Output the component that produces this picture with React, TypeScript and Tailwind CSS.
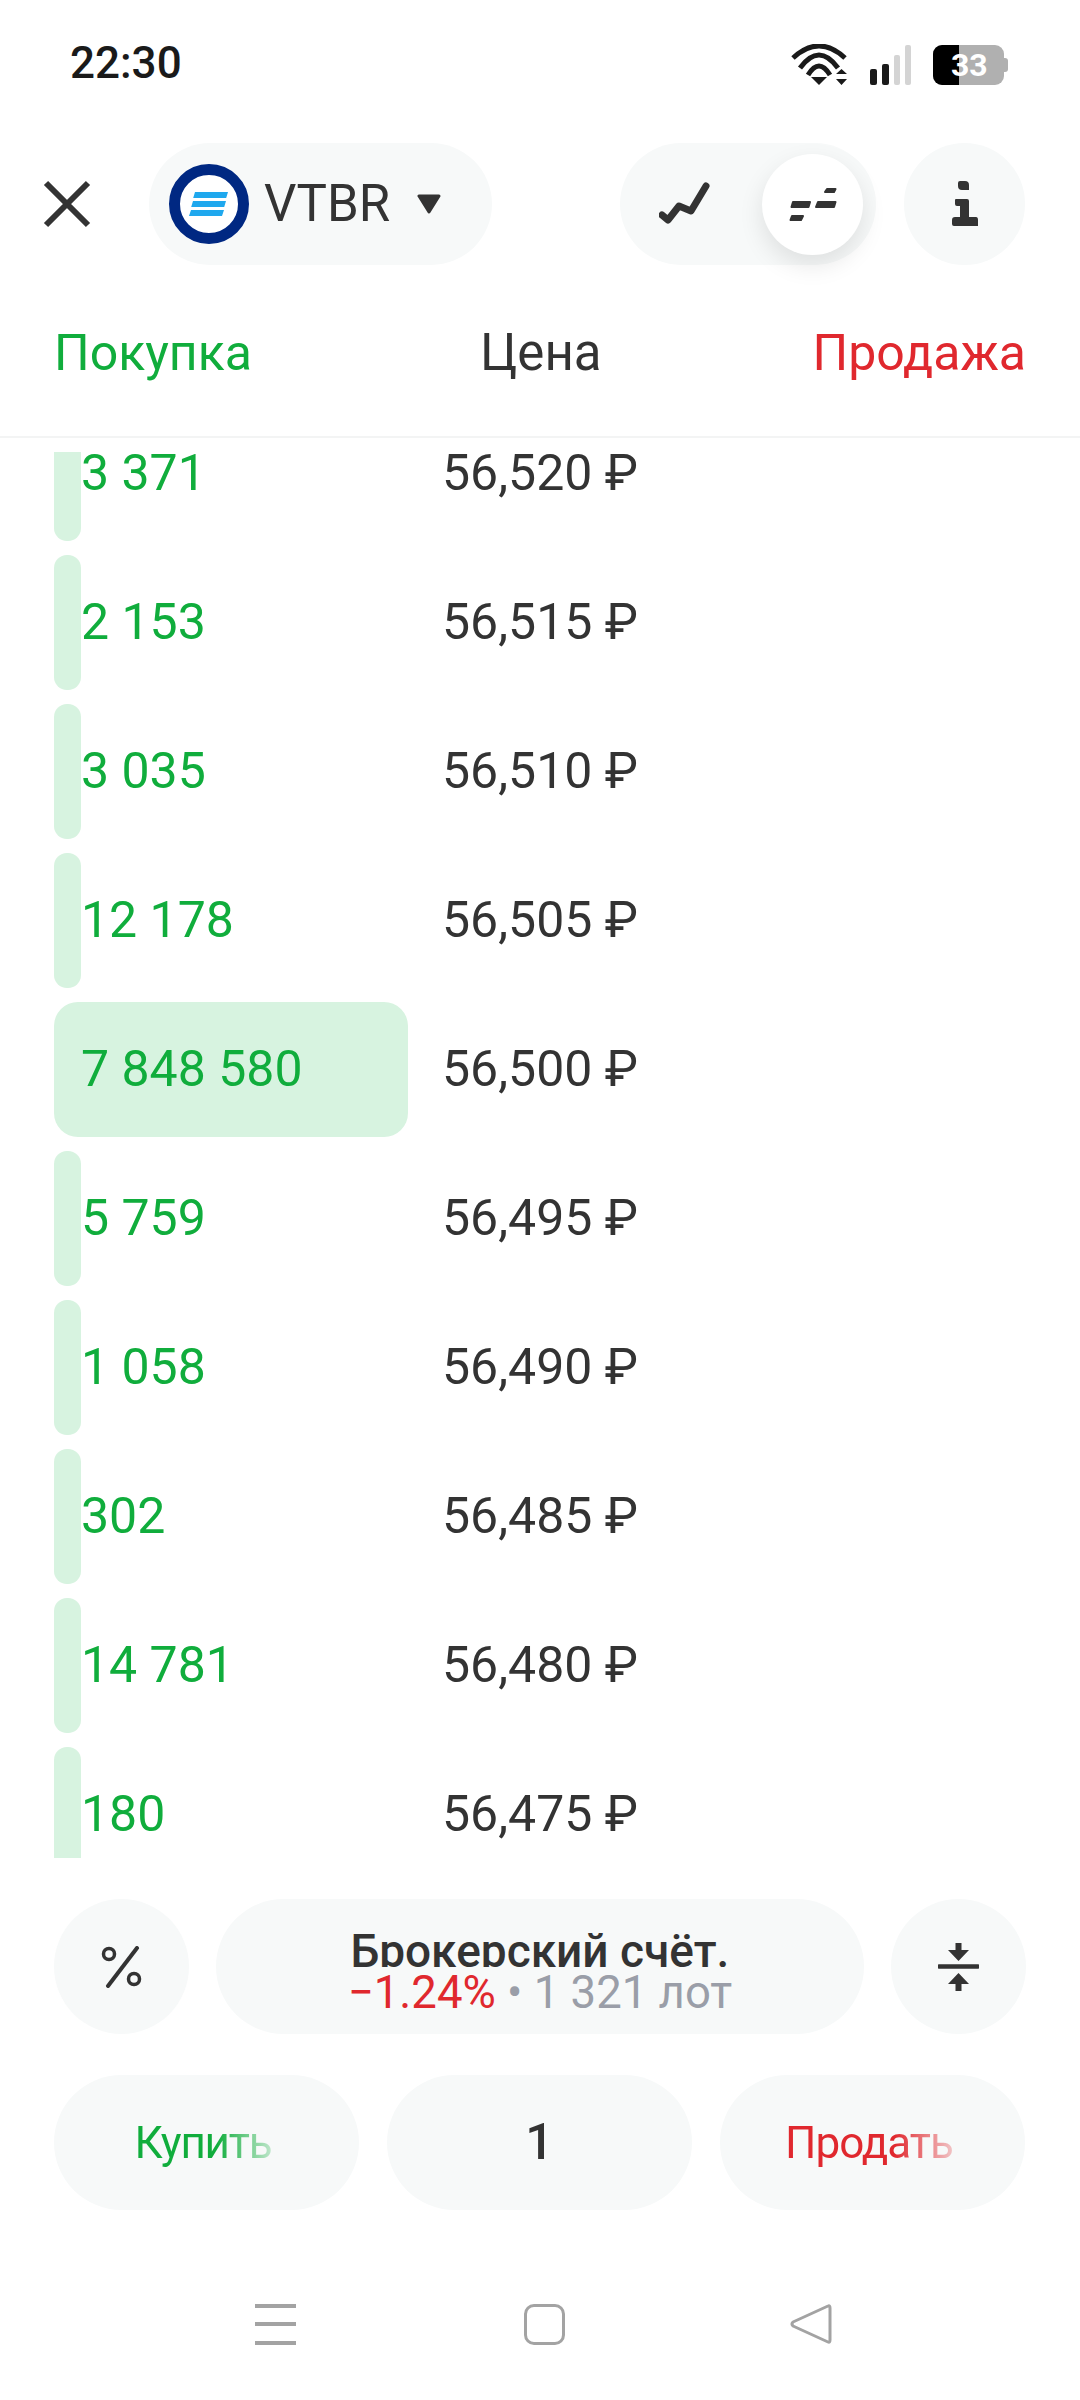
import React from 'react';

const rows = [
  { qty: '3 371', price: '56,520 ₽', width: 27 },
  { qty: '2 153', price: '56,515 ₽', width: 27 },
  { qty: '3 035', price: '56,510 ₽', width: 27 },
  { qty: '12 178', price: '56,505 ₽', width: 27 },
  { qty: '7 848 580', price: '56,500 ₽', width: 354 },
  { qty: '5 759', price: '56,495 ₽', width: 27 },
  { qty: '1 058', price: '56,490 ₽', width: 27 },
  { qty: '302', price: '56,485 ₽', width: 27 },
  { qty: '14 781', price: '56,480 ₽', width: 27 },
  { qty: '180', price: '56,475 ₽', width: 27 },
];

const StatusIcons = () => (
  <div className="flex items-center">
    <svg width="57" height="42" viewBox="0 0 57 42" className="mr-[22px]">
      <g fill="none" stroke="#1a1a1a" strokeWidth="5" strokeLinecap="butt">
        <path d="M2 14 Q28 -10 54 14" />
        <path d="M9 24 Q28 -2 47 24" />
        <path d="M17 31 Q28 13 39 31" />
      </g>
      <path d="M20 33 L36 33 L28 41 Z" fill="#1a1a1a" />
      <path d="M45 30 L50.5 25 L56 30 Z M45 35 L56 35 L50.5 41 Z" fill="#1a1a1a" />
    </svg>
    <div className="flex items-end gap-[5px] h-[40px] mr-[22px]">
      <div className="w-[7px] h-[16px] rounded-[2px] bg-[#1a1a1a]" />
      <div className="w-[7px] h-[21px] rounded-[2px] bg-[#1a1a1a]" />
      <div className="w-[6px] h-[30px] rounded-[2px] bg-[#d4d4d4]" />
      <div className="w-[6px] h-[40px] rounded-[2px] bg-[#d4d4d4]" />
    </div>
    <div className="relative flex items-center">
      <div className="flex w-[71px] h-[40px] rounded-[9px] overflow-hidden bg-[#b0b0b0]">
        <div className="w-[26px] bg-black" />
      </div>
      <div className="w-[4px] h-[14px] rounded-r-[3px] bg-[#b0b0b0]" />
      <span className="absolute left-[18px] top-0 h-[40px] leading-[40px] text-[32px] font-bold text-white">33</span>
    </div>
  </div>
);

const CloseIcon = () => (
  <svg width="48" height="48" viewBox="0 0 48 48">
    <path d="M3 3 L45 45 M45 3 L3 45" stroke="#333" strokeWidth="6" fill="none" />
  </svg>
);

const VtbLogo = () => (
  <div className="w-[80px] h-[80px] rounded-full border-[11px] border-[#002882] bg-white flex items-center justify-center shrink-0">
    <svg width="40" height="26" viewBox="0 0 40 26">
      <path d="M6 1 H39 L37.2 7 H4.2 Z M4 10 H37 L35.2 16 H2.2 Z M2 19 H35 L33 25 H0 Z" fill="#1fa8ee" />
    </svg>
  </div>
);

const ChartIcon = () => (
  <svg width="52" height="44" viewBox="0 0 52 44">
    <path d="M3 33 L9 38 L20 24 L32 29 L47 4" fill="none" stroke="#333" strokeWidth="7" strokeLinecap="round" strokeLinejoin="round" />
  </svg>
);

const BookIcon = () => (
  <svg width="48" height="35" viewBox="0 0 48 35">
    <path d="M38 2 H46.5 L45 5 H36 Z M29 15 H46.5 L45 20 H27 Z M4 15 H21 L19.5 20 H2.5 Z M3 29 H14 L12 33 H1.5 Z" fill="#333" stroke="#333" strokeWidth="2" strokeLinejoin="round" />
  </svg>
);

const InfoIcon = () => (
  <svg width="26" height="46" viewBox="0 0 26 46">
    <path d="M8 0 H13 Q17 0 17 4 V9 H10 Q6 9 6 5 V2 Q6 0 8 0 Z M4 18 H15 Q17 18 17 20 V36 H24 Q26 36 26 39 V45 H2 Q0 45 0 43 V39 Q0 36 3 36 H8 V25 H5 Q3 25 3 23 V19 Q3 18 4 18 Z" fill="#333" />
  </svg>
);

const PercentIcon = () => (
  <svg width="42" height="42" viewBox="0 0 42 42">
    <g fill="none" stroke="#333" strokeWidth="3.5">
      <circle cx="8" cy="8" r="5.5" />
      <circle cx="33" cy="33" r="5.5" />
      <path d="M36 2 L7 40" strokeWidth="4" strokeLinecap="round" />
    </g>
  </svg>
);

const CompressIcon = () => (
  <svg width="41" height="50" viewBox="0 0 41 50">
    <path d="M1 24.5 H40" stroke="#333" strokeWidth="4.5" strokeLinecap="round" />
    <path d="M17.5 1 H23.5 V8 H31 L20.5 19 L10 8 H17.5 Z" fill="#333" />
    <path d="M17.5 49 H23.5 V42 H31 L20.5 31 L10 42 H17.5 Z" fill="#333" />
  </svg>
);

const BookRow = ({ qty, price, width }: { qty: string; price: string; width: number }) => (
  <div className="flex items-center h-[135px] shrink-0">
    <div className="relative flex items-center w-[388px] h-full">
      <div className="absolute inset-y-0 left-0 bg-[#d7f3e0]" style={{ width, borderRadius: width > 100 ? 24 : 13 }} />
      <span className="relative pl-[27px] text-[50px] text-[#10ad3c]">{qty}</span>
    </div>
    <span className="text-[50px] text-[#333]">{price}</span>
  </div>
);

export default function App() {
  return (
    <div className="w-[1080px] h-[2400px] bg-white flex flex-col overflow-hidden font-['Roboto',sans-serif]">
      <div className="h-[143px] flex items-start justify-between pt-[44px] pl-[70px] pr-[72px]">
        <span className="text-[44px] leading-[38px] font-medium text-[#1a1a1a]">22:30</span>
        <StatusIcons />
      </div>

      <div className="h-[122px] flex items-center pl-[43px] pr-[54px]">
        <CloseIcon />
        <div className="ml-[58px] w-[343px] h-[122px] rounded-full bg-[#f7f9f9] flex items-center pl-[20px]">
          <VtbLogo />
          <span className="ml-[15px] text-[51px] text-[#333]">VTBR</span>
          <svg width="24" height="20" viewBox="0 0 24 20" className="ml-[27px]">
            <path d="M2 2 H22 L12 18 Z" fill="#333" stroke="#333" strokeWidth="3" strokeLinejoin="round" />
          </svg>
        </div>
        <div className="ml-[128px] w-[256px] h-[122px] rounded-full bg-[#f7f9f9] flex items-center">
          <div className="ml-[39px] w-[52px] flex justify-center">
            <ChartIcon />
          </div>
          <div className="ml-[51px] w-[101px] h-[101px] rounded-full bg-white shadow-[0_10px_24px_rgba(0,0,0,0.1)] flex items-center justify-center">
            <BookIcon />
          </div>
        </div>
        <div className="ml-[28px] w-[121px] h-[122px] rounded-full bg-[#f7f9f9] flex items-center justify-center">
          <InfoIcon />
        </div>
      </div>

      <div className="h-[173px] border-b-2 border-[#f3f4f4] flex items-center justify-between pl-[54px] pr-[54px] pt-[6px] text-[50px]">
        <span className="text-[#10ad3c]">Покупка</span>
        <span className="text-[#333] ml-[17px] text-[51px]">Цена</span>
        <span className="text-[#e0282e]">Продажа</span>
      </div>

      <div className="mt-[14px] mx-[54px] h-[1406px] overflow-hidden">
        <div className="mt-[-46px] flex flex-col gap-[14px]">
          {rows.map((row) => (
            <BookRow key={row.price} {...row} />
          ))}
        </div>
      </div>

      <div className="mt-[41px] mx-[54px] flex gap-[27px] h-[135px]">
        <div className="w-[135px] rounded-full bg-[#f7f9f9] flex items-center justify-center">
          <PercentIcon />
        </div>
        <div className="flex-1 rounded-full bg-[#f7f9f9] flex flex-col items-center pt-[30px]">
          <div className="h-[38px] overflow-hidden text-[46px] leading-[44px] font-medium text-[#333]">Брокерский счёт.</div>
          <div className="mt-[4px] text-[45.5px] leading-[44px] text-[#9a9ea8]">
            <span className="text-[#e0282e]">−1.24%</span> • 1 321 лот
          </div>
        </div>
        <div className="w-[135px] rounded-full bg-[#f7f9f9] flex items-center justify-center">
          <CompressIcon />
        </div>
      </div>

      <div className="mt-[41px] mx-[54px] flex gap-[28px] h-[135px]">
        <div className="w-[305px] rounded-full bg-[#f7f9f9] flex items-center justify-center pr-[7px]">
          <span className="text-[44px] tracking-[-1.2px] bg-gradient-to-r from-[#10ad3c] from-60% to-[#10ad3c]/25 bg-clip-text text-transparent">Купить</span>
        </div>
        <div className="w-[305px] rounded-full bg-[#f7f9f9] flex items-center justify-center text-[50px] font-medium text-[#333]">1</div>
        <div className="w-[305px] rounded-full bg-[#f7f9f9] flex items-center justify-center pr-[7px]">
          <span className="text-[44px] tracking-[-1px] bg-gradient-to-r from-[#e0282e] from-65% to-[#e0282e]/25 bg-clip-text text-transparent">Продать</span>
        </div>
      </div>

      <div className="mt-[93px] h-[42px] flex items-center pl-[255px]">
        <div className="flex flex-col justify-between w-[41px] h-[41px]">
          <div className="h-[4px] bg-[#a3a3a3]" />
          <div className="h-[4px] bg-[#a3a3a3]" />
          <div className="h-[4px] bg-[#a3a3a3]" />
        </div>
        <div className="ml-[228px] w-[41px] h-[41px] rounded-[10px] border-[3px] border-[#a3a3a3]" />
        <svg width="42" height="42" viewBox="0 0 42 42" className="ml-[225px]">
          <path d="M38 3 Q40 2 40 5 V37 Q40 40 38 39 L3 23 Q1 21 3 19 Z" fill="none" stroke="#a3a3a3" strokeWidth="3" strokeLinejoin="round" />
        </svg>
      </div>
    </div>
  );
}
